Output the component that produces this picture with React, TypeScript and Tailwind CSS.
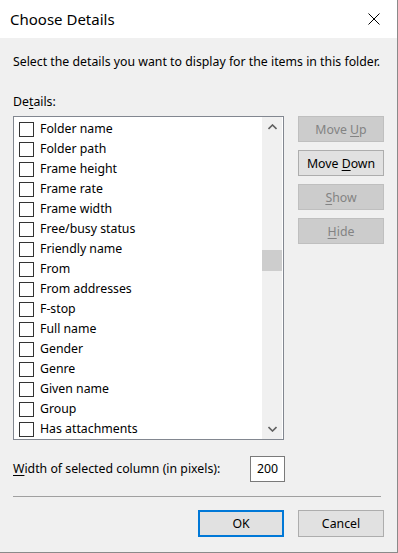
const details: string[] = [
  "Folder name",
  "Folder path",
  "Frame height",
  "Frame rate",
  "Frame width",
  "Free/busy status",
  "Friendly name",
  "From",
  "From addresses",
  "F-stop",
  "Full name",
  "Gender",
  "Genre",
  "Given name",
  "Group",
  "Has attachments",
];

const font = { fontFamily: '"Noto Sans", "Open Sans", sans-serif' };

const SideButton = ({
  pre,
  u,
  post,
  enabled,
}: {
  pre: string;
  u: string;
  post: string;
  enabled?: boolean;
}) => (
  <div
    className={
      enabled
        ? "h-[26px] w-[86px] pt-[2px] flex items-center justify-center border border-[#adadad] bg-[#e1e1e1] text-black"
        : "h-[26px] w-[86px] pt-[2px] flex items-center justify-center border border-[#bfbfbf] bg-[#cccccc] text-[#838383]"
    }
  >
    <span className="whitespace-pre">
      {pre}
      <span className="underline underline-offset-2">{u}</span>
      {post}
    </span>
  </div>
);

export default function App() {
  return (
    <div
      className="w-[398px] h-[553px] bg-[#f0f0f0] border-r border-b border-[#8a8a8a] flex flex-col text-[12.3px] leading-[16px] text-black overflow-hidden"
      style={font}
    >
      {/* title bar */}
      <div className="h-[38px] bg-white flex items-center justify-between shrink-0">
        <div className="pl-[10px] text-[15px] leading-[20px]">Choose Details</div>
        <div className="w-[46px] h-[38px] flex items-center justify-center">
          <svg width="12" height="12" viewBox="0 0 12 12">
            <path d="M0.5 0.5 L11.5 11.5 M11.5 0.5 L0.5 11.5" stroke="#000" strokeWidth="1" />
          </svg>
        </div>
      </div>

      <div className="pl-[13px] pt-[16px]">
        <div>Select the details you want to display for the items in this folder.</div>
        <div className="mt-[24px]">
          De<span className="underline underline-offset-2">t</span>ails:
        </div>

        <div className="flex mt-[6px]">
          {/* list box */}
          <div className="w-[271px] h-[324px] border border-[#828790] bg-white flex">
            <div className="flex-1 pt-[2px] pl-[5px]">
              {details.map((d) => (
                <div key={d} className="h-[20px] flex items-center">
                  <div className="w-[15px] h-[15px] border border-[#333] bg-white shrink-0" />
                  <div className="ml-[6px] whitespace-nowrap">{d}</div>
                </div>
              ))}
            </div>
            <div className="w-[20px] mr-[1px] bg-[#f0f0f0] flex flex-col">
              <div className="h-[20px] flex items-center justify-center">
                <svg width="9" height="6" viewBox="0 0 9 6">
                  <path d="M0.5 5 L4.5 1 L8.5 5" fill="none" stroke="#606060" strokeWidth="1.6" />
                </svg>
              </div>
              <div className="flex-1 pt-[113px]">
                <div className="h-[21px] bg-[#cdcdcd]" />
              </div>
              <div className="h-[20px] flex items-center justify-center">
                <svg width="9" height="6" viewBox="0 0 9 6">
                  <path d="M0.5 1 L4.5 5 L8.5 1" fill="none" stroke="#606060" strokeWidth="1.6" />
                </svg>
              </div>
            </div>
          </div>

          {/* side buttons */}
          <div className="ml-[14px] flex flex-col gap-[8px]">
            <SideButton pre="Move " u="U" post="p" />
            <SideButton pre="Move " u="D" post="own" enabled />
            <SideButton pre="" u="S" post="how" />
            <SideButton pre="" u="H" post="ide" />
          </div>
        </div>

        {/* width row */}
        <div className="flex items-center mt-[16px] w-[272px] justify-between">
          <div>
            <span className="underline underline-offset-2">W</span>idth of selected column (in pixels):
          </div>
          <div className="w-[35px] h-[26px] border border-[#7a7a7a] bg-white flex items-center justify-end pr-[6px]">
            200
          </div>
        </div>

        <div className="mt-[14px] w-[368px] h-px bg-[#a0a0a0]" />

        <div className="flex justify-end gap-[14px] w-[371px] mt-[13px]">
          <div className="w-[86px] h-[27px] border-2 border-[#0078d7] bg-[#e1e1e1] flex items-center justify-center">
            OK
          </div>
          <div className="w-[86px] h-[27px] border border-[#adadad] bg-[#e1e1e1] flex items-center justify-center">
            Cancel
          </div>
        </div>
      </div>
    </div>
  );
}
